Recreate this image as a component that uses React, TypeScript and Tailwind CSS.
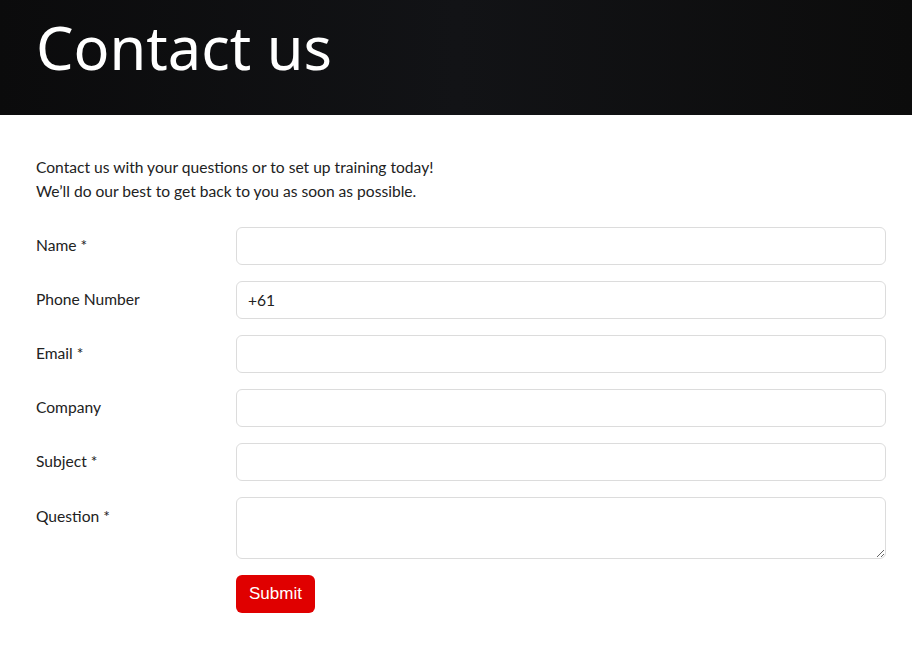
import React from 'react';

const fields = [
  { label: 'Name', required: true },
  { label: 'Phone Number', required: false, value: '+61' },
  { label: 'Email', required: true },
  { label: 'Company', required: false },
  { label: 'Subject', required: true },
];

export default function App() {
  return (
    <div className="min-h-[659px] bg-white font-['Lato',sans-serif] text-[15.6px] text-[#222]">
      <header className="h-[115px] bg-gradient-to-r from-[#0b0b0c] via-[#121316] to-[#0c0c0c] px-[36px]">
        <h1 className="pt-[9px] font-['Noto_Sans',sans-serif] text-[59.5px] leading-[76px] font-normal text-white">
          Contact us
        </h1>
      </header>
      <main className="pr-[26px] pl-[36px] pt-[40px]">
        <p className="leading-[24px]">
          Contact us with your questions or to set up training today!
          <br />
          We’ll do our best to get back to you as soon as possible.
        </p>
        <form className="mt-[24px] flex flex-col gap-[16px]" onSubmit={(e) => e.preventDefault()}>
          {fields.map((f) => (
            <div key={f.label} className="flex items-center">
              <label className="w-[200px] shrink-0">
                {f.label}
                {f.required && ' *'}
              </label>
              <input
                type="text"
                defaultValue={f.value}
                className="h-[38px] flex-1 rounded-[6px] border border-[#dcdcdc] px-[11px] text-[15.6px] outline-none"
              />
            </div>
          ))}
          <div className="flex items-start">
            <label className="w-[200px] shrink-0 pt-[8px]">Question *</label>
            <textarea className="h-[62px] flex-1 rounded-[6px] border border-[#dcdcdc] px-[11px] py-[8px] outline-none" />
          </div>
          <div className="flex pl-[200px]">
            <button
              type="submit"
              className="h-[38px] rounded-[6px] bg-[#e00000] px-[13px] font-['Liberation_Sans',sans-serif] text-[17px] text-white"
            >
              Submit
            </button>
          </div>
        </form>
      </main>
    </div>
  );
}
